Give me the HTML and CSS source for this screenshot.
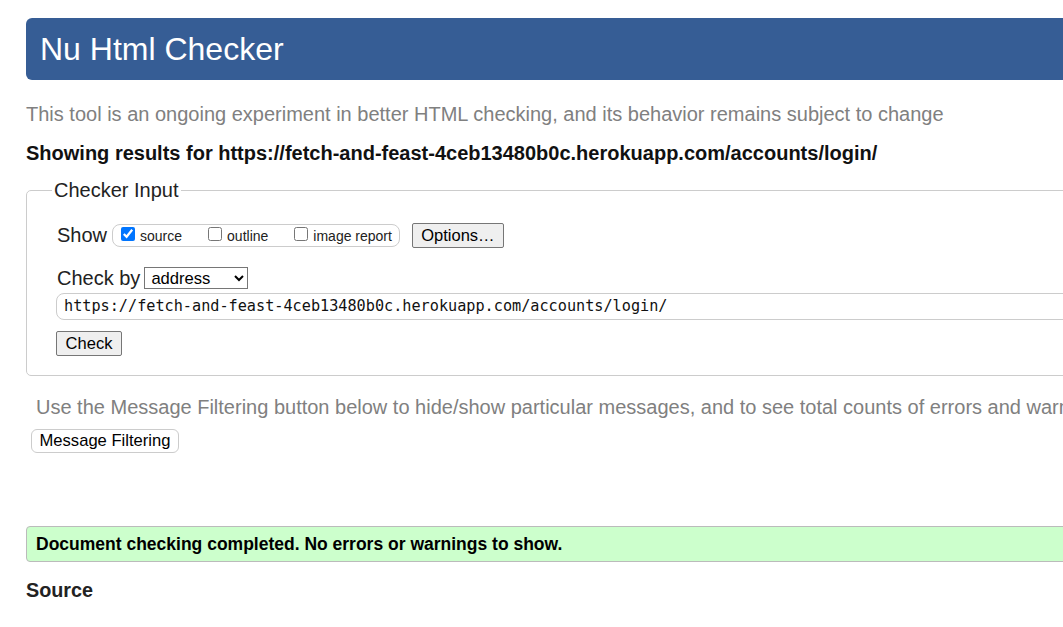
FILE: index.html
```html
<!DOCTYPE html>
<html lang="en">
<head>
<meta charset="utf-8">
<title>Showing results for https://fetch-and-feast-4ceb13480b0c.herokuapp.com/accounts/login/ - Nu Html Checker</title>
<link rel="stylesheet" href="styles.css">
</head>
<body>
<div class="page">
  <h1 class="banner">Nu Html Checker</h1>
  <p class="intro">This tool is an ongoing experiment in better HTML checking, and its behavior remains subject to change</p>
  <p class="showing">Showing results for https://fetch-and-feast-4ceb13480b0c.herokuapp.com/accounts/login/</p>
  <form class="checker">
    <fieldset class="panel">
      <legend class="legend">Checker Input</legend>
      <div class="row show-row">
        <span class="label">Show</span>
        <span class="group">
          <label class="opt"><input type="checkbox" class="cb" checked><span>source</span></label>
          <label class="opt"><input type="checkbox" class="cb"><span>outline</span></label>
          <label class="opt last"><input type="checkbox" class="cb"><span>image report</span></label>
        </span>
        <button type="button" class="btn options">Options…</button>
      </div>
      <div class="row by-row">
        <span class="label">Check by</span>
        <select class="sel"><option>address</option></select>
      </div>
      <input type="text" class="url" value="https://fetch-and-feast-4ceb13480b0c.herokuapp.com/accounts/login/">
      <div class="row">
        <button type="button" class="btn check">Check</button>
      </div>
    </fieldset>
  </form>
  <p class="filter-note">Use the Message Filtering button below to hide/show particular messages, and to see total counts of errors and warnings.</p>
  <button type="button" class="filter-btn">Message Filtering</button>
  <p class="success">Document checking completed. No errors or warnings to show.</p>
  <h2 class="source">Source</h2>
</div>
</body>
</html>
```
FILE: styles.css
```css
html {
  overflow: hidden;
}
body {
  margin: 0;
  background: #fff;
  font-family: "Liberation Sans", Arial, sans-serif;
  color: #222;
}
.page {
  width: 1500px;
  padding: 18px 0 0 26px;
}
.banner {
  margin: 0;
  height: 62px;
  line-height: 62px;
  padding-left: 14px;
  background: #365d95;
  color: #fff;
  font-size: 32px;
  font-weight: normal;
  border-radius: 6px 0 0 6px;
}
.intro {
  margin: 22px 0 0;
  font-size: 20px;
  line-height: 24px;
  color: #808080;
  white-space: nowrap;
}
.showing {
  margin: 15.5px 0 0;
  font-size: 20px;
  line-height: 23px;
  font-weight: bold;
  color: #111;
  white-space: nowrap;
}
.checker {
  margin: 14px 0 0;
}
.panel {
  margin: 0;
  padding: 21px 20px 19px 30px;
  border: 1px solid #ccc;
  border-radius: 5px;
  min-width: 0;
}
.legend {
  margin-left: -5px;
  padding: 0 2px;
  font-size: 20px;
  line-height: 23px;
  color: #222;
}
.row {
  display: flex;
  align-items: center;
}
.show-row {
  height: 25px;
}
.label {
  font-size: 20px;
  line-height: 23px;
  margin-right: 5px;
}
.group {
  display: flex;
  align-items: center;
  height: 21px;
  border: 1px solid #ccc;
  border-radius: 8px;
  padding: 0 7px 0 8px;
}
.opt {
  display: flex;
  align-items: center;
  font-size: 14px;
  line-height: 16px;
  padding-top: 2px;
  color: #222;
  margin-right: 26px;
}
.opt.last {
  margin-right: 0;
}
.cb {
  width: 14px;
  height: 14px;
  margin: -4px 5px 0 0;
  accent-color: #0075ff;
}
.btn {
  font-family: "Liberation Sans", Arial, sans-serif;
  font-size: 16.5px;
  color: #000;
  background: #efefef;
  border: 1px solid #767676;
  border-radius: 2px;
  padding: 0;
}
.options {
  margin-left: 12px;
  width: 92px;
  height: 25px;
}
.by-row {
  margin-top: 19px;
  height: 23px;
}
.label + .sel {
  margin-left: -1px;
}
.sel {
  width: 104px;
  height: 22px;
  font-family: "Liberation Sans", Arial, sans-serif;
  font-size: 16.6px;
  color: #000;
  border: 1px solid #767676;
  border-radius: 0;
  background: #fff;
  padding: 0 0 0 2px;
}
.url {
  display: block;
  box-sizing: border-box;
  margin: 3px 0 0 -1px;
  width: 1400px;
  height: 27px;
  border: 1px solid #ccc;
  border-radius: 8px;
  padding: 0 7px;
  font-family: "DejaVu Sans Mono", "Liberation Mono", monospace;
  font-size: 15.2px;
  color: #111;
  background: #fff;
  outline: none;
}
.check {
  margin: 11px 0 0 -1px;
  width: 66px;
  height: 25px;
}
.filter-note {
  margin: 20.5px 0 0 10px;
  font-size: 20px;
  line-height: 23px;
  color: #808080;
  white-space: nowrap;
}
.filter-btn {
  display: block;
  margin: 10px 0 0 5px;
  width: 148px;
  height: 24px;
  padding: 0;
  font-family: "Liberation Sans", Arial, sans-serif;
  font-size: 16.6px;
  color: #000;
  background: #fff;
  border: 1px solid #ccc;
  border-radius: 6px;
}
.success {
  margin: 73px 0 0;
  height: 34px;
  line-height: 34px;
  padding-left: 9px;
  background: #ccffcc;
  border: 1px solid #bbb;
  border-radius: 4px;
  font-size: 17.5px;
  font-weight: bold;
  color: #000;
}
.source {
  margin: 17px 0 0;
  font-size: 19.8px;
  line-height: 23px;
  font-weight: bold;
  color: #222;
}
```
